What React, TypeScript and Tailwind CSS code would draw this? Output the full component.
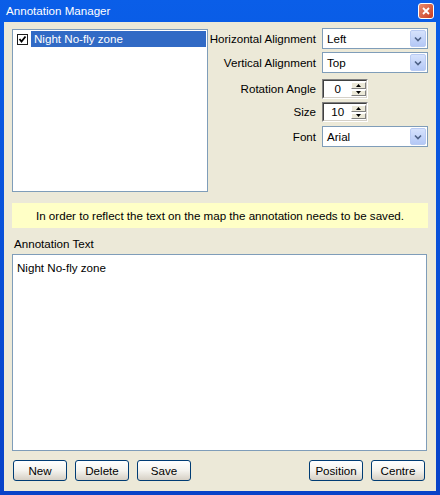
import React from 'react';

const font = { fontFamily: '"Liberation Sans", Arial, sans-serif' };

function Combo({ value }: { value: string }) {
  return (
    <div className="flex h-[21px] w-[106px] items-center border border-[#7F9DB9] bg-white p-[1px]">
      <span className="flex-1 pl-[3px] text-[11.6px] text-black">{value}</span>
      <div className="flex h-full w-[16px] items-center justify-center rounded-[2px] border border-[#B9CBF3] bg-gradient-to-b from-[#D6E2FC] to-[#B4C8F6]">
        <svg width="8" height="6" viewBox="0 0 8 6">
          <path d="M1 1.5 L4 4.5 L7 1.5" stroke="#4D6185" strokeWidth="1.6" fill="none" />
        </svg>
      </div>
    </div>
  );
}

function Spinner({ value }: { value: string }) {
  return (
    <div className="flex h-[20px] w-[46px] items-center border border-t-[#808080] border-l-[#808080] border-r-white border-b-white">
      <div className="flex h-full w-full items-center border border-t-[#404040] border-l-[#404040] border-r-[#D4D0C8] border-b-[#D4D0C8] bg-white">
        <span className="w-[28px] text-center text-[11.6px] text-black">{value}</span>
        <div className="flex h-full w-[15px] flex-col gap-[1px] py-[1px]">
          <div className="flex flex-1 items-center justify-center border border-t-white border-l-white border-r-[#808080] border-b-[#808080] bg-[#ECE9D8]">
            <svg width="5" height="3" viewBox="0 0 5 3"><path d="M2.5 0 L5 3 L0 3 Z" fill="#000" /></svg>
          </div>
          <div className="flex flex-1 items-center justify-center border border-t-white border-l-white border-r-[#808080] border-b-[#808080] bg-[#ECE9D8]">
            <svg width="5" height="3" viewBox="0 0 5 3"><path d="M0 0 L5 0 L2.5 3 Z" fill="#000" /></svg>
          </div>
        </div>
      </div>
    </div>
  );
}

function XPButton({ label }: { label: string }) {
  return (
    <button className="flex h-[21px] w-[54px] items-center justify-center rounded-[3px] border border-[#003C74] bg-gradient-to-b from-white via-[#F4F3EE] to-[#D6D0C5] text-[11.6px] text-black">
      {label}
    </button>
  );
}

function Row({ label, children }: { label: string; children: React.ReactNode }) {
  return (
    <div className="flex items-center">
      <span className="w-[108px] whitespace-nowrap text-right text-[11.6px] text-black">{label}</span>
      <div className="ml-[6px]">{children}</div>
    </div>
  );
}

export default function App() {
  return (
    <div
      className="flex h-[495px] w-[440px] flex-col bg-gradient-to-b from-[#0A5EE8] to-[#0842C8] px-[4px] pb-[4px]"
      style={font}
    >
      {/* Title bar */}
      <div className="flex h-[22px] items-center justify-between pl-[2px] pr-[2px]">
        <span className="text-[11.6px] text-white">Annotation Manager</span>
        <div className="flex h-[16px] w-[16px] items-center justify-center rounded-[3px] border border-white bg-gradient-to-br from-[#E88A6E] to-[#C8381C]">
          <svg width="8" height="8" viewBox="0 0 8 8">
            <path d="M1 1 L7 7 M7 1 L1 7" stroke="white" strokeWidth="1.8" />
          </svg>
        </div>
      </div>

      {/* Body */}
      <div className="flex flex-1 flex-col bg-[#ECE9D8] px-[8px] pt-[7px]">
        <div className="flex">
          {/* List box */}
          <div className="h-[163px] w-[196px] border border-[#7F9DB9] bg-white p-[1px]">
            <div className="flex items-center">
              <div className="ml-[3px] mr-[3px] flex h-[11px] w-[11px] items-center justify-center border border-[#1C1C1C] bg-white">
                <svg width="9" height="9" viewBox="0 0 9 9">
                  <path d="M1.5 4 L3.5 6.5 L7.5 1.5" stroke="black" strokeWidth="1.8" fill="none" />
                </svg>
              </div>
              <div className="flex h-[16px] flex-1 items-center bg-[#316AC5] pl-[3px] text-[11.6px] text-white">
                Night No-fly zone
              </div>
            </div>
          </div>

          {/* Properties */}
          <div className="flex flex-col">
            <div className="-mt-[1px] flex flex-col gap-[3px]">
              <Row label="Horizontal Alignment"><Combo value="Left" /></Row>
              <Row label="Vertical Alignment"><Combo value="Top" /></Row>
            </div>
            <div className="mt-[6px] flex flex-col gap-[3px]">
              <Row label="Rotation Angle"><Spinner value="0" /></Row>
              <Row label="Size"><Spinner value="10" /></Row>
            </div>
            <div className="mt-[4px]">
              <Row label="Font"><Combo value="Arial" /></Row>
            </div>
          </div>
        </div>

        {/* Notice */}
        <div className="mt-[11px] flex h-[25px] w-[416px] items-center justify-center bg-[#FFFFC6] text-[11.6px] text-black">
          In order to reflect the text on the map the annotation needs to be saved.
        </div>

        <div className="mt-[9px] pl-[2px] text-[11.6px] leading-[14px] text-black">Annotation Text</div>
        <div className="mt-[3px] h-[197px] w-[415px] border border-[#7F9DB9] bg-white px-[4px] py-[4px] text-[11.6px] text-black">
          Night No-fly zone
        </div>

        {/* Buttons */}
        <div className="mt-[9px] flex w-[413px] items-center pl-[1px]">
          <div className="flex gap-[8px]">
            <XPButton label="New" />
            <XPButton label="Delete" />
            <XPButton label="Save" />
          </div>
          <div className="ml-auto flex gap-[8px]">
            <XPButton label="Position" />
            <XPButton label="Centre" />
          </div>
        </div>
      </div>
    </div>
  );
}
